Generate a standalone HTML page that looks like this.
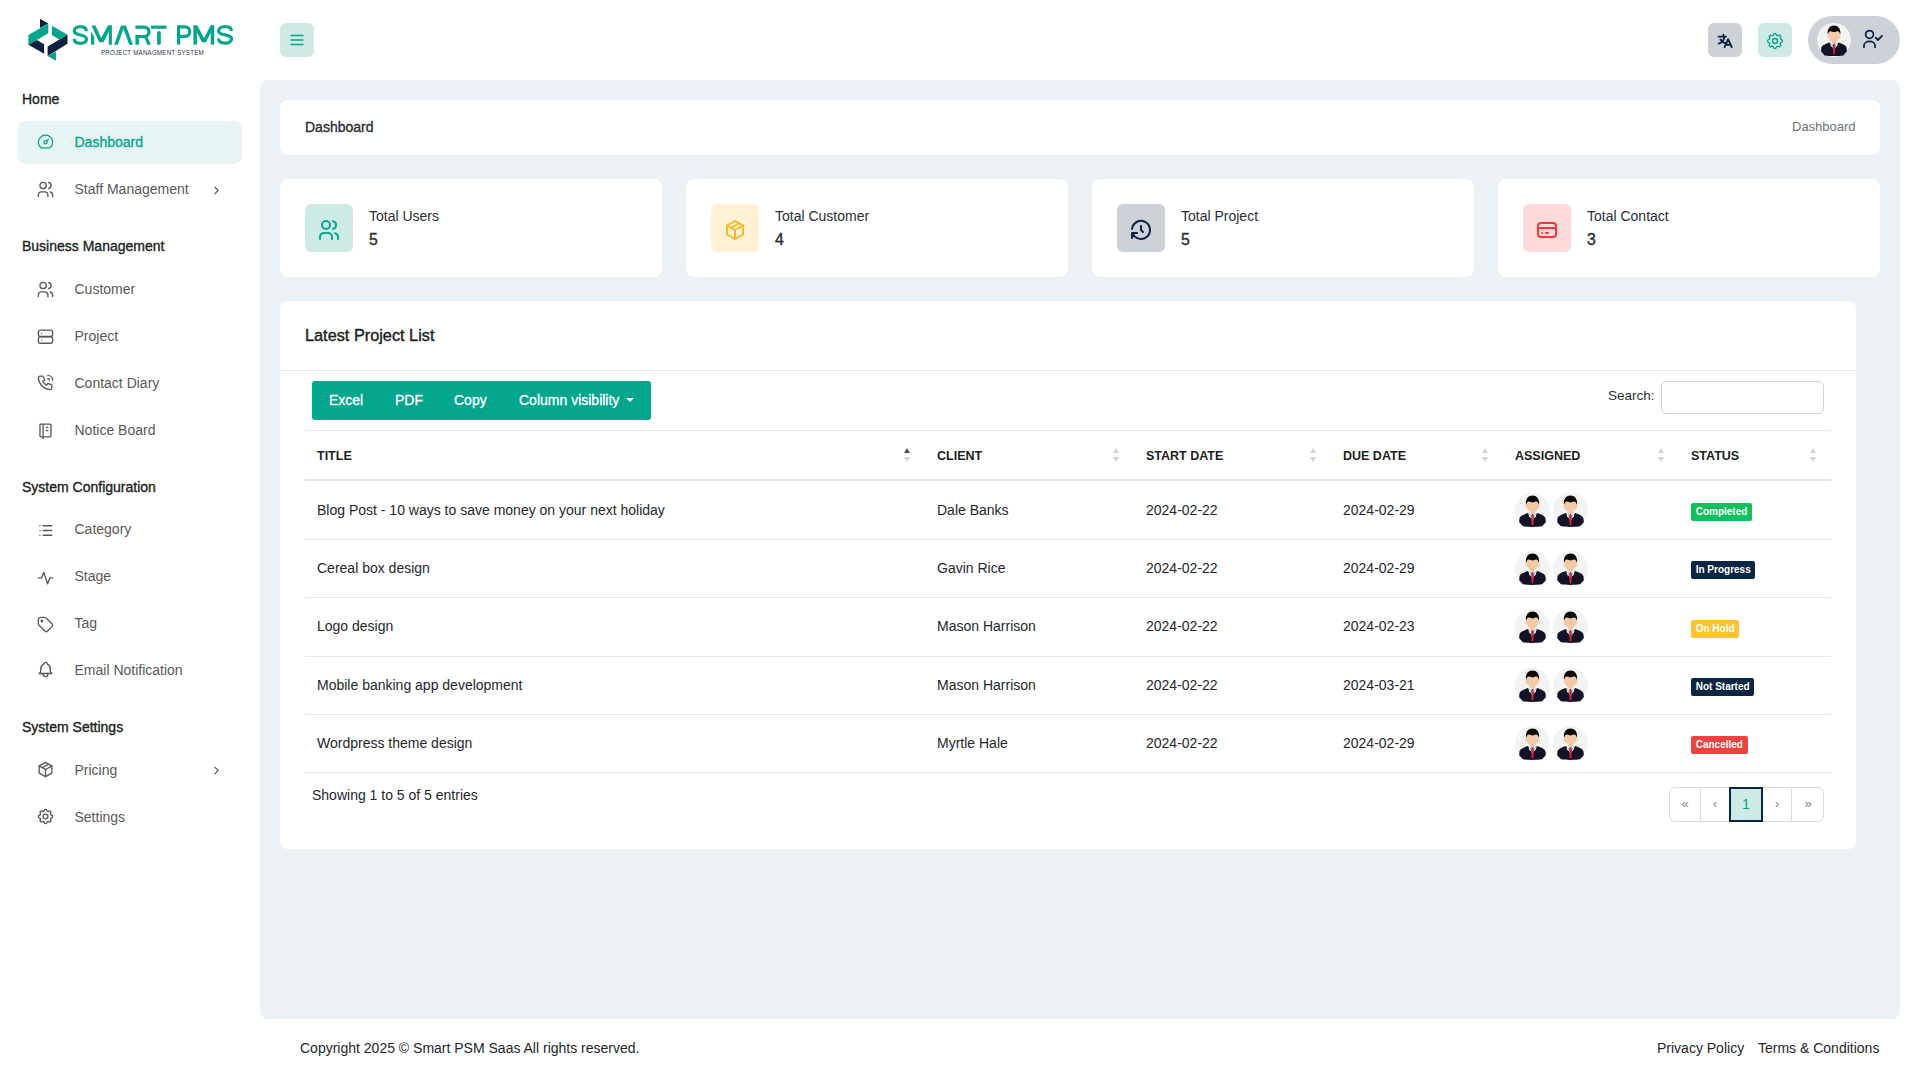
<!DOCTYPE html>
<html><head><meta charset="utf-8"><title>Smart PMS</title>
<style>
*{box-sizing:border-box;margin:0;padding:0}
html,body{width:1920px;height:1080px;overflow:hidden;background:#fff;font-family:"Liberation Sans",sans-serif;color:#212529;font-size:14px}
.a{position:absolute;white-space:nowrap}
svg{position:absolute;overflow:visible}
svg.i{fill:none;stroke-linecap:round;stroke-linejoin:round}
.sbh{position:absolute;left:22px;font-size:14px;-webkit-text-stroke:0.35px #1c1f23;color:#1c1f23;line-height:16px;white-space:nowrap}
.sbi{position:absolute;left:74.5px;font-size:14px;color:#58595c;line-height:16px;white-space:nowrap}
.sbic{left:37px;stroke:#5b6068;stroke-width:1.5}
.card{position:absolute;background:#fff;border-radius:8px}
.stt{position:absolute;font-size:14px;color:#2b2f33;line-height:16px}
.stn{position:absolute;font-size:15.8px;-webkit-text-stroke:0.4px #2b2f33;color:#2b2f33;line-height:18px}
.ibox{position:absolute;width:48px;height:48px;border-radius:6px}
.th{position:absolute;top:448px;font-size:12.5px;font-weight:bold;color:#1c1f23;line-height:16px}
.td{position:absolute;font-size:14px;color:#24282c;line-height:16px;white-space:nowrap}
.hl{position:absolute;left:305px;width:1526px;height:1px;background:#e6e8ea}
.badge{position:absolute;left:1691px;height:18px;border-radius:2px;color:#fff;font-size:10px;font-weight:bold;line-height:18px;padding:0 4.7px;white-space:nowrap}
.sort{position:absolute;top:448px;width:6px;height:15px}
.sort:before{content:"";position:absolute;left:0;top:0;border-left:3px solid transparent;border-right:3px solid transparent;border-bottom:5px solid #d0d3d6}
.sort:after{content:"";position:absolute;left:0;top:9px;border-left:3px solid transparent;border-right:3px solid transparent;border-top:5px solid #d0d3d6}
.sort.up:before{border-bottom-color:#555}
.btn{position:absolute;top:392px;font-size:14px;-webkit-text-stroke:0.3px #fff;color:#fff;line-height:16px;white-space:nowrap}
.pg{position:absolute;top:796px;font-size:13px;color:#7a8aa0;line-height:16px;text-align:center;width:20px}
</style></head>
<body>
<svg width="0" height="0" style="position:absolute"><defs>
<pattern id="chk" width="60" height="60" patternUnits="userSpaceOnUse"><rect width="60" height="60" fill="#ffffff"/><rect width="30" height="30" fill="#e7e7e7"/><rect x="30" y="30" width="30" height="30" fill="#e7e7e7"/></pattern>
<symbol id="av" viewBox="0 0 840 840">
<circle cx="420" cy="420" r="420" fill="url(#chk)"/>
<path fill="#f2c8a4" d="M262 300c-18 0-18 60 8 70zM578 300c18 0 18 60 -8 70z"/>
<rect x="365" y="420" width="110" height="90" fill="#eebf97"/>
<path fill="#f3caa5" d="M268 220C268 180 310 175 420 175S572 180 572 220V330C572 370 545 390 515 420C480 455 455 472 420 472S360 455 325 420C295 390 268 370 268 330Z"/>
<path fill="#0e0a0a" d="M262 260c-10-120 60-200 158-200s168 80 158 200l-8 20c-10-60-40-80-70-75c-30 5-50 20-80 20s-50-15-80-20c-30-5-60 15-70 75z"/>
<path fill="#151228" d="M105 640C105 560 160 535 310 480L420 520L530 480C680 535 735 560 735 640L740 700L650 800C580 815 500 815 420 815C340 815 260 815 190 800L100 700Z"/>
<path fill="#ffffff" d="M320 478l100 22l100-22l-20 90l-80 60l-80-60z"/>
<path fill="#6dd3de" d="M335 490l85 200l85-200l-30 20l-55 70l-55-70z"/>
<path fill="#db2637" d="M398 505h44l10 45l-12 200l-20 40l-20-40l-12-200z"/>
</symbol></defs></svg>
<!-- ============ LOGO ============ -->
<svg style="left:24px;top:14px" width="48" height="50" viewBox="0 0 1037 1080">
<polygon fill="#0b2240" points="345,100 525,205 345,305"/>
<polygon fill="#03a58c" points="95,455 525,205 525,415 275,560 95,665"/>
<polygon fill="#0b2240" points="95,662 275,560 435,655 435,860"/>
<polygon fill="#03a58c" points="605,255 940,450 760,550 605,455"/>
<polygon fill="#0b2240" points="510,700 940,450 940,645 510,905"/>
<polygon fill="#03a58c" points="510,905 690,810 690,1010"/>
</svg>
<svg style="left:0;top:0" width="260" height="80" viewBox="0 0 260 80">
<g fill="#03a58c">
<polygon points="91,31.2 94.2,37.2 94.2,44.8 91,44.8"/>
<polygon points="91.5,25.4 95.4,25.4 101.2,38 107.9,25.4 111.9,25.4 103.4,42.2 99.2,42.2"/>
<rect x="108.8" y="25.4" width="3.1" height="19.4"/>
<polygon points="114.2,44.8 121,25.4 125.9,25.4 132.9,44.8 129.3,44.8 123.4,29 117.8,44.8"/>
<rect x="135.4" y="34.9" width="3.5" height="9.9"/>
<polygon points="144.2,37.3 147.6,37.3 150.9,44.8 147.3,44.8"/>
<rect x="151.1" y="25.6" width="15.3" height="3.15"/>
<rect x="157.1" y="31.25" width="3.7" height="13.5" rx="1.2"/>
<rect x="177" y="25.4" width="3.2" height="19.2"/>
<rect x="193.4" y="25.4" width="3.5" height="19.2"/>
<polygon points="193.4,25.4 197.4,25.4 204,38 210.6,25.4 214.2,25.4 206,42.2 201.9,42.2"/>
<rect x="210.7" y="25.4" width="3.5" height="19.2"/>
</g>
<g fill="none" stroke="#03a58c" stroke-width="3.2">
<path d="M86.30 31.20 C86.30 28.00 83.82 26.60 80.40 26.60 C76.74 26.60 74.30 28.40 74.30 31.00 C74.30 33.90 77.72 34.35 80.40 34.95 C83.33 35.55 86.50 36.65 86.50 38.90 C86.50 41.50 84.06 43.30 80.40 43.30 C76.98 43.30 74.20 41.80 74.20 38.70"/>
<path d="M135.4 27.05 H144.3 A4.72 4.72 0 0 1 144.3 36.5 H136.9"/>
<path d="M178.6 26.95 H185.3 A4.68 4.68 0 0 1 185.3 36.3 H178.6"/>
<path d="M231.40 31.10 C231.40 27.90 228.74 26.50 225.10 26.50 C221.20 26.50 218.60 28.30 218.60 30.90 C218.60 33.80 222.24 34.25 225.10 34.85 C228.22 35.45 231.60 36.55 231.60 38.80 C231.60 41.40 229.00 43.20 225.10 43.20 C221.46 43.20 218.50 41.70 218.50 38.60"/>
</g>
</svg>
<div class="a" style="left:101.4px;top:47.5px;font-size:8px;color:#2a3350;line-height:9px;letter-spacing:0.3px;transform:scaleX(0.77);transform-origin:0 0">PROJECT MANAGMENT SYSTEM</div>

<!-- ============ TOPBAR ============ -->
<div class="a" style="left:280px;top:23px;width:34px;height:34px;background:#cfeae5;border-radius:6px"></div>
<svg class="i" style="left:288px;top:31px" width="18" height="18" viewBox="0 0 24 24" stroke="#03a58c" stroke-width="2"><path d="M4 6h16M4 12h16M4 18h16"/></svg>

<div class="a" style="left:1708px;top:23px;width:34px;height:34px;background:#cdd1d8;border-radius:6px"></div>
<div class="a" style="left:1758px;top:23px;width:34px;height:34px;background:#cfeae5;border-radius:6px"></div>
<svg class="i" style="left:1765px;top:30.8px" width="20" height="20" viewBox="0 0 24 24" stroke="#03a58c" stroke-width="1.6"><path d="M10.325 4.317c.426 -1.756 2.924 -1.756 3.35 0a1.724 1.724 0 0 0 2.573 1.066c1.543 -.94 3.31 .826 2.37 2.37a1.724 1.724 0 0 0 1.065 2.572c1.756 .426 1.756 2.924 0 3.35a1.724 1.724 0 0 0 -1.066 2.573c.94 1.543 -.826 3.31 -2.37 2.37a1.724 1.724 0 0 0 -2.572 1.065c-.426 1.756 -2.924 1.756 -3.35 0a1.724 1.724 0 0 0 -2.573 -1.066c-1.543 .94 -3.31 -.826 -2.37 -2.37a1.724 1.724 0 0 0 -1.065 -2.572c-1.756 -.426 -1.756 -2.924 0 -3.35a1.724 1.724 0 0 0 1.066 -2.573c-.94 -1.543 .826 -3.31 2.37 -2.37c1 .608 2.296 .07 2.572 -1.065z"/><circle cx="12" cy="12" r="3"/></svg>
<div class="a" style="left:1808px;top:16px;width:92px;height:48px;background:#cdd1d8;border-radius:24px"></div>

<!-- ============ SIDEBAR ============ -->
<div class="sbh" style="top:91px">Home</div>
<div class="a" style="left:18px;top:121px;width:224px;height:43px;background:#e6f5f3;border-radius:8px"></div>
<div class="sbi" style="top:134px;color:#03a58c;-webkit-text-stroke:0.3px #03a58c">Dashboard</div>
<div class="sbi" style="top:181px">Staff Management</div>
<div class="sbh" style="top:238px">Business Management</div>
<div class="sbi" style="top:281px">Customer</div>
<div class="sbi" style="top:328px">Project</div>
<div class="sbi" style="top:375px">Contact Diary</div>
<div class="sbi" style="top:422px">Notice Board</div>
<div class="sbh" style="top:479px">System Configuration</div>
<div class="sbi" style="top:521px">Category</div>
<div class="sbi" style="top:568px">Stage</div>
<div class="sbi" style="top:615px">Tag</div>
<div class="sbi" style="top:662px">Email Notification</div>
<div class="sbh" style="top:719px">System Settings</div>
<div class="sbi" style="top:762px">Pricing</div>
<div class="sbi" style="top:809px">Settings</div>

<!-- ============ MAIN ============ -->

<div class="a" style="left:260px;top:80px;width:1640px;height:939px;background:#ecf1f5;border-radius:8px"></div>

<!-- breadcrumb -->
<div class="card" style="left:280px;top:100px;width:1600px;height:55px"></div>
<div class="a" style="left:305px;top:119px;font-size:14px;-webkit-text-stroke:0.35px #2b2f33;color:#2b2f33;line-height:16px">Dashboard</div>
<div class="a" style="left:1792px;top:119px;font-size:13px;color:#6c737a;line-height:16px">Dashboard</div>

<!-- stat cards -->
<div class="card" style="left:280px;top:179px;width:382px;height:98px"></div>
<div class="card" style="left:686px;top:179px;width:382px;height:98px"></div>
<div class="card" style="left:1092px;top:179px;width:382px;height:98px"></div>
<div class="card" style="left:1498px;top:179px;width:382px;height:98px"></div>
<div class="ibox" style="left:305px;top:204px;background:#cdeae5"></div>
<div class="ibox" style="left:711px;top:204px;background:#fff2d4"></div>
<div class="ibox" style="left:1117px;top:204px;background:#cdd1d8"></div>
<div class="ibox" style="left:1523px;top:204px;background:#fdd9d9"></div>
<div class="stt" style="left:369px;top:208px">Total Users</div>
<div class="stn" style="left:369px;top:231px">5</div>
<div class="stt" style="left:775px;top:208px">Total Customer</div>
<div class="stn" style="left:775px;top:231px">4</div>
<div class="stt" style="left:1181px;top:208px">Total Project</div>
<div class="stn" style="left:1181px;top:231px">5</div>
<div class="stt" style="left:1587px;top:208px">Total Contact</div>
<div class="stn" style="left:1587px;top:231px">3</div>

<!-- project list card -->
<div class="card" style="left:280px;top:301px;width:1576px;height:548px"></div>
<div class="a" style="left:305px;top:326px;font-size:16.3px;-webkit-text-stroke:0.4px #1c1f23;color:#1c1f23;line-height:18px">Latest Project List</div>
<div class="a" style="left:280px;top:370px;width:1576px;height:1px;background:#e6e8ea"></div>

<div class="a" style="left:312px;top:381px;width:339px;height:39px;background:#03a58c;border-radius:3px"></div>
<div class="btn" style="left:329px">Excel</div>
<div class="btn" style="left:395px">PDF</div>
<div class="btn" style="left:454px">Copy</div>
<div class="btn" style="left:519px">Column visibility</div>
<div class="a" style="left:626px;top:398px;border-left:4px solid transparent;border-right:4px solid transparent;border-top:4px solid #fff"></div>

<div class="a" style="left:1608px;top:388px;font-size:13.5px;color:#2b2f33;line-height:16px">Search:</div>
<div class="a" style="left:1661px;top:381px;width:163px;height:33px;border:1px solid #ced4da;border-radius:5px;background:#fff"></div>

<div class="hl" style="top:430px"></div>
<div class="th" style="left:317px">TITLE</div>
<div class="th" style="left:937px">CLIENT</div>
<div class="th" style="left:1146px">START DATE</div>
<div class="th" style="left:1343px">DUE DATE</div>
<div class="th" style="left:1515px">ASSIGNED</div>
<div class="th" style="left:1691px">STATUS</div>
<div class="sort up" style="left:903.6px"></div>
<div class="sort" style="left:1112.6px"></div>
<div class="sort" style="left:1309.6px"></div>
<div class="sort" style="left:1481.6px"></div>
<div class="sort" style="left:1657.6px"></div>
<div class="sort" style="left:1809.6px"></div>
<div class="hl" style="top:479px;height:2px;background:#e4e6e9"></div>

<!-- rows -->
<div class="td" style="left:317px;top:502px">Blog Post - 10 ways to save money on your next holiday</div>
<div class="td" style="left:937px;top:502px">Dale Banks</div>
<div class="td" style="left:1146px;top:502px">2024-02-22</div>
<div class="td" style="left:1343px;top:502px">2024-02-29</div>
<div class="badge" style="top:503px;background:#0fc15a">Completed</div>
<div class="hl" style="top:539px"></div>

<div class="td" style="left:317px;top:560px">Cereal box design</div>
<div class="td" style="left:937px;top:560px">Gavin Rice</div>
<div class="td" style="left:1146px;top:560px">2024-02-22</div>
<div class="td" style="left:1343px;top:560px">2024-02-29</div>
<div class="badge" style="top:561px;background:#0b2545">In Progress</div>
<div class="hl" style="top:597px"></div>

<div class="td" style="left:317px;top:618px">Logo design</div>
<div class="td" style="left:937px;top:618px">Mason Harrison</div>
<div class="td" style="left:1146px;top:618px">2024-02-22</div>
<div class="td" style="left:1343px;top:618px">2024-02-23</div>
<div class="badge" style="top:620px;background:#ffc233">On Hold</div>
<div class="hl" style="top:656px"></div>

<div class="td" style="left:317px;top:677px">Mobile banking app development</div>
<div class="td" style="left:937px;top:677px">Mason Harrison</div>
<div class="td" style="left:1146px;top:677px">2024-02-22</div>
<div class="td" style="left:1343px;top:677px">2024-03-21</div>
<div class="badge" style="top:678px;background:#0b2545">Not Started</div>
<div class="hl" style="top:714px"></div>

<div class="td" style="left:317px;top:735px">Wordpress theme design</div>
<div class="td" style="left:937px;top:735px">Myrtle Hale</div>
<div class="td" style="left:1146px;top:735px">2024-02-22</div>
<div class="td" style="left:1343px;top:735px">2024-02-29</div>
<div class="badge" style="top:736px;background:#f04141">Cancelled</div>
<div class="hl" style="top:772px"></div>

<div class="td" style="left:312px;top:787px">Showing 1 to 5 of 5 entries</div>

<!-- pagination -->
<div class="a" style="left:1669px;top:787px;width:155px;height:35px;border:1px solid #d7dce2;border-radius:6px;background:#fff"></div>
<div class="a" style="left:1700px;top:788px;width:1px;height:33px;background:#d7dce2"></div>
<div class="a" style="left:1791px;top:788px;width:1px;height:33px;background:#d7dce2"></div>
<div class="a" style="left:1729px;top:787px;width:34px;height:35px;background:#cdeae5;border:2px solid #0b2545"></div>
<div class="pg" style="left:1675px">«</div>
<div class="pg" style="left:1705px">‹</div>
<div class="pg" style="left:1736px;color:#03a58c;font-size:14px">1</div>
<div class="pg" style="left:1767px">›</div>
<div class="pg" style="left:1798px">»</div>

<!-- footer -->
<div class="td" style="left:300px;top:1040px">Copyright 2025 © Smart PSM Saas All rights reserved.</div>
<div class="td" style="left:1657px;top:1040px">Privacy Policy</div>
<div class="td" style="left:1758px;top:1040px">Terms &amp; Conditions</div>

<!-- icons -->
<svg style="left:1514.9px;top:492.5px" width="35" height="35"><use href="#av"/></svg>
<svg style="left:1552.8px;top:492.5px" width="35" height="35"><use href="#av"/></svg>
<svg style="left:1514.9px;top:550.5px" width="35" height="35"><use href="#av"/></svg>
<svg style="left:1552.8px;top:550.5px" width="35" height="35"><use href="#av"/></svg>
<svg style="left:1514.9px;top:609.0px" width="35" height="35"><use href="#av"/></svg>
<svg style="left:1552.8px;top:609.0px" width="35" height="35"><use href="#av"/></svg>
<svg style="left:1514.9px;top:667.5px" width="35" height="35"><use href="#av"/></svg>
<svg style="left:1552.8px;top:667.5px" width="35" height="35"><use href="#av"/></svg>
<svg style="left:1514.9px;top:725.5px" width="35" height="35"><use href="#av"/></svg>
<svg style="left:1552.8px;top:725.5px" width="35" height="35"><use href="#av"/></svg>
<svg style="left:1817px;top:23px" width="34" height="34"><use href="#av"/></svg>
<svg class="i" style="left:1856px;top:20px" width="40" height="40" viewBox="0 0 1080 1080" stroke="#0b2240" stroke-width="48"><circle cx="365" cy="390" r="105"/><path d="M215 735v-40a150 115 0 0 1 300 0v40"/><path d="M530 478l62 62l110 -110"/></svg>
<svg class="i" style="left:1708px;top:23px" width="34" height="34" viewBox="0 0 1080 1080" stroke="#0b2240" stroke-width="58"><path d="M335 432H570M490 372V432"/><path d="M520 450C500 560 440 630 340 655"/><path d="M395 525C430 590 490 630 565 645"/><path d="M525 770L640 515L755 770M575 690H705"/></svg>

<svg class="i" style="left:36.40px;top:132.20px" width="19" height="19" viewBox="0 0 24 24" stroke="#03a58c" stroke-width="1.6"><circle cx="12" cy="13" r="2"/><path d="M13.45 11.55l2.05 -2.05"/><path d="M6.4 20a9 9 0 1 1 11.2 0z"/></svg>
<svg class="i" style="left:36.40px;top:180.00px" width="19" height="19" viewBox="0 0 24 24" stroke="#58595c" stroke-width="1.7"><circle cx="9" cy="7" r="4"/><path d="M3 21v-2a4 4 0 0 1 4 -4h4a4 4 0 0 1 4 4v2"/><path d="M16 3.13a4 4 0 0 1 0 7.75"/><path d="M21 21v-2a4 4 0 0 0 -3 -3.85"/></svg>
<svg class="i" style="left:36.40px;top:280.20px" width="19" height="19" viewBox="0 0 24 24" stroke="#58595c" stroke-width="1.7"><circle cx="9" cy="7" r="4"/><path d="M3 21v-2a4 4 0 0 1 4 -4h4a4 4 0 0 1 4 4v2"/><path d="M16 3.13a4 4 0 0 1 0 7.75"/><path d="M21 21v-2a4 4 0 0 0 -3 -3.85"/></svg>
<svg class="i" style="left:36.40px;top:327.30px" width="19" height="19" viewBox="0 0 24 24" stroke="#58595c" stroke-width="1.7"><rect x="3" y="4" width="18" height="8" rx="2.5"/><rect x="3" y="12.5" width="18" height="8" rx="2.5"/><path d="M7 8v.01M7 16.5v.01"/></svg>
<svg class="i" style="left:36.40px;top:373.10px" width="19" height="19" viewBox="0 0 24 24" stroke="#58595c" stroke-width="1.7"><path d="M5 4h4l2 5l-2.5 1.5a11 11 0 0 0 5 5l1.5 -2.5l5 2v4a2 2 0 0 1 -2 2a16 16 0 0 1 -15 -15a2 2 0 0 1 2 -2"/><path d="M15 7a2 2 0 0 1 2 2"/><path d="M15 3a6 6 0 0 1 6 6"/></svg>
<svg class="i" style="left:36.40px;top:420.90px" width="19" height="19" viewBox="0 0 24 24" stroke="#58595c" stroke-width="1.7"><path d="M6 4h11a2 2 0 0 1 2 2v12a2 2 0 0 1 -2 2h-11a1 1 0 0 1 -1 -1v-14a1 1 0 0 1 1 -1m3 0v18"/><path d="M13 8h2M13 12h2"/></svg>
<svg class="i" style="left:36.40px;top:521.00px" width="19" height="19" viewBox="0 0 24 24" stroke="#58595c" stroke-width="1.7"><path d="M9 6h11M9 12h11M9 18h11M5 6v.01M5 12v.01M5 18v.01"/></svg>
<svg class="i" style="left:36.40px;top:568.00px" width="19" height="19" viewBox="0 0 24 24" stroke="#58595c" stroke-width="1.7"><path d="M3 12.5H7L9.8 5.5L14.6 20L17.5 12.5H21"/></svg>
<svg class="i" style="left:36.40px;top:615.00px" width="19" height="19" viewBox="0 0 24 24" stroke="#58595c" stroke-width="1.7"><circle cx="7.5" cy="7.5" r="1"/><path d="M3 6v5.172a2 2 0 0 0 .586 1.414l7.71 7.71a2.41 2.41 0 0 0 3.408 0l5.592 -5.592a2.41 2.41 0 0 0 0 -3.408l-7.71 -7.71a2 2 0 0 0 -1.414 -.586h-5.172a3 3 0 0 0 -3 3z"/></svg>
<svg class="i" style="left:36.40px;top:660.00px" width="19" height="19" viewBox="0 0 24 24" stroke="#58595c" stroke-width="1.7"><path d="M10 5a2 2 0 1 1 4 0a7 7 0 0 1 4 6v3a4 4 0 0 0 2 3h-16a4 4 0 0 0 2 -3v-3a7 7 0 0 1 4 -6"/><path d="M9 17v1a3 3 0 0 0 6 0v-1"/></svg>
<svg class="i" style="left:36.40px;top:760.00px" width="19" height="19" viewBox="0 0 24 24" stroke="#58595c" stroke-width="1.7"><path d="M12 3l8 4.5v9l-8 4.5l-8 -4.5v-9l8 -4.5"/><path d="M12 12l8 -4.5M12 12v9M12 12l-8 -4.5M16 5.25l-8 4.5"/></svg>
<svg class="i" style="left:36.40px;top:807.20px" width="19" height="19" viewBox="0 0 24 24" stroke="#58595c" stroke-width="1.7"><path d="M10.325 4.317c.426 -1.756 2.924 -1.756 3.35 0a1.724 1.724 0 0 0 2.573 1.066c1.543 -.94 3.31 .826 2.37 2.37a1.724 1.724 0 0 0 1.065 2.572c1.756 .426 1.756 2.924 0 3.35a1.724 1.724 0 0 0 -1.066 2.573c.94 1.543 -.826 3.31 -2.37 2.37a1.724 1.724 0 0 0 -2.572 1.065c-.426 1.756 -2.924 1.756 -3.35 0a1.724 1.724 0 0 0 -2.573 -1.066c-1.543 .94 -3.31 -.826 -2.37 -2.37a1.724 1.724 0 0 0 -1.065 -2.572c-1.756 -.426 -1.756 -2.924 0 -3.35a1.724 1.724 0 0 0 1.066 -2.573c-.94 -1.543 .826 -3.31 2.37 -2.37c1 .608 2.296 .07 2.572 -1.065z"/><circle cx="12" cy="12" r="3"/></svg>
<svg class="i" style="left:209.7px;top:183.5px" width="13" height="13" viewBox="0 0 24 24" stroke="#58595c" stroke-width="2"><path d="M9 6l6 6l-6 6"/></svg>
<svg class="i" style="left:209.7px;top:764.0px" width="13" height="13" viewBox="0 0 24 24" stroke="#58595c" stroke-width="2"><path d="M9 6l6 6l-6 6"/></svg>
<svg class="i" style="left:317px;top:217.5px" width="24" height="24" viewBox="0 0 24 24" stroke="#03a58c" stroke-width="2"><circle cx="9" cy="7" r="4"/><path d="M3 21v-2a4 4 0 0 1 4 -4h4a4 4 0 0 1 4 4v2"/><path d="M16 3.13a4 4 0 0 1 0 7.75"/><path d="M21 21v-2a4 4 0 0 0 -3 -3.85"/></svg>
<svg class="i" style="left:723px;top:217.5px" width="24" height="24" viewBox="0 0 24 24" stroke="#f7b928" stroke-width="2"><path d="M12 3l8 4.5v9l-8 4.5l-8 -4.5v-9l8 -4.5"/><path d="M12 12l8 -4.5M12 12v9M12 12l-8 -4.5M16 5.25l-8 4.5"/></svg>
<svg class="i" style="left:1129px;top:217.5px" width="24" height="24" viewBox="0 0 24 24" stroke="#0b2240" stroke-width="2"><path d="M12 8v4l2 2"/><path d="M3.05 11a9 9 0 1 1 .5 4m-.5 5v-5h5"/></svg>
<svg class="i" style="left:1535px;top:217.5px" width="24" height="24" viewBox="0 0 24 24" stroke="#f5363d" stroke-width="2"><rect x="3" y="5" width="18" height="14" rx="3"/><path d="M3 10h18M7 15h.01M11 15h2"/></svg>
</body></html>
